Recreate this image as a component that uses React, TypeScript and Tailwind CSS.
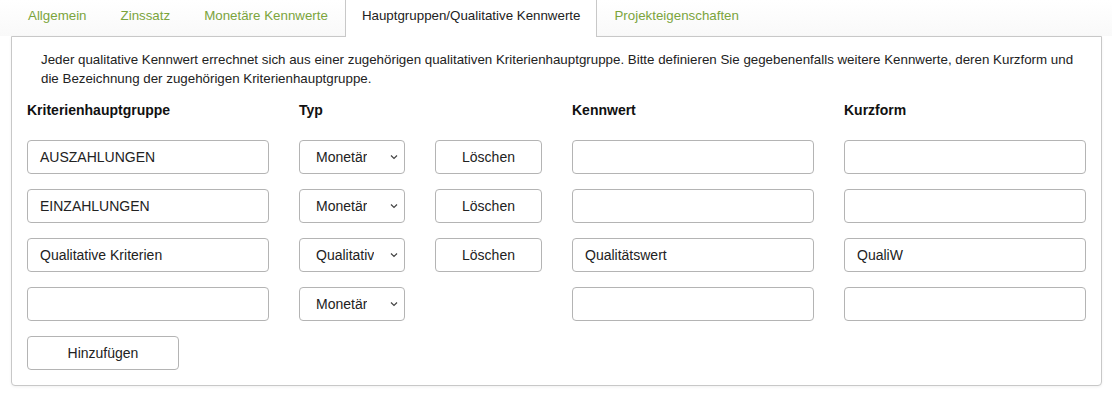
import React from "react";

const tabs = [
  { label: "Allgemein", active: false },
  { label: "Zinssatz", active: false },
  { label: "Monetäre Kennwerte", active: false },
  { label: "Hauptgruppen/Qualitative Kennwerte", active: true },
  { label: "Projekteigenschaften", active: false },
];

type Row = { group: string; typ: string; del: boolean; kennwert: string; kurz: string };

const rows: Row[] = [
  { group: "AUSZAHLUNGEN", typ: "Monetär", del: true, kennwert: "", kurz: "" },
  { group: "EINZAHLUNGEN", typ: "Monetär", del: true, kennwert: "", kurz: "" },
  { group: "Qualitative Kriterien", typ: "Qualitativ", del: true, kennwert: "Qualitätswert", kurz: "QualiW" },
  { group: "", typ: "Monetär", del: false, kennwert: "", kurz: "" },
];

function TextBox({ value }: { value: string }) {
  return (
    <div className="h-[34px] w-[242px] rounded-[4px] border border-[#b4b4b4] bg-white px-[12px] flex items-center text-[14px] text-[#222]">
      {value}
    </div>
  );
}

function SelectBox({ value }: { value: string }) {
  return (
    <div className="h-[34px] w-[106px] rounded-[4px] border border-[#b4b4b4] bg-white pl-[16px] pr-[6px] flex items-center justify-between text-[14px] text-[#222]">
      <span className="whitespace-nowrap overflow-hidden">{value}</span>
      <svg width="8" height="6" viewBox="0 0 8 6" className="shrink-0">
        <path d="M1 1.5 L4 4.5 L7 1.5" fill="none" stroke="#444" strokeWidth="1.2" />
      </svg>
    </div>
  );
}

function Btn({ label, w }: { label: string; w: string }) {
  return (
    <div className={`h-[34px] ${w} rounded-[4px] border border-[#b4b4b4] bg-white flex items-center justify-center text-[14px] text-[#222]`}>
      {label}
    </div>
  );
}

export default function App() {
  return (
    <div
      className="w-[1112px] h-[399px] bg-white"
      style={{ fontFamily: '"Liberation Sans", Arial, sans-serif' }}
    >
      <div className="flex h-[36px] pl-[11px] bg-gradient-to-b from-white to-[#f9f9f9]">
        {tabs.map((t) =>
          t.active ? (
            <div
              key={t.label}
              className="h-[37px] px-[16px] flex items-center border-x border-[#c8c8c8] bg-white text-[13.33px] text-[#222] relative z-10 pb-[5px]"
            >
              {t.label}
            </div>
          ) : (
            <div
              key={t.label}
              className="h-[36px] px-[17px] flex items-center text-[13.33px] text-[#7ba43c] pb-[4px]"
            >
              {t.label}
            </div>
          )
        )}
      </div>
      <div className="mx-[11px] w-[1091px] h-[350px] border border-[#c8c8c8] rounded-b-[4px] bg-white shadow-[0_1px_3px_rgba(0,0,0,0.06)]">
        <p className="pl-[29px] pr-[20px] pt-[13px] text-[13.33px] leading-[19px] text-[#222]">
          Jeder qualitative Kennwert errechnet sich aus einer zugehörigen qualitativen Kriterienhauptgruppe. Bitte definieren Sie gegebenenfalls weitere Kennwerte, deren Kurzform und die Bezeichnung der zugehörigen Kriterienhauptgruppe.
        </p>
        <div className="pl-[15px] pt-[12px]">
          <div className="grid grid-cols-[242px_106px_107px_242px_242px] gap-x-[30px] text-[14px] font-bold text-[#111] h-[20px] items-center">
            <div>Kriterienhauptgruppe</div>
            <div>Typ</div>
            <div></div>
            <div>Kennwert</div>
            <div>Kurzform</div>
          </div>
          <div className="mt-[20px] flex flex-col gap-[15px]">
            {rows.map((r, i) => (
              <div key={i} className="grid grid-cols-[242px_106px_107px_242px_242px] gap-x-[30px]">
                <TextBox value={r.group} />
                <SelectBox value={r.typ} />
                {r.del ? <Btn label="Löschen" w="w-[107px]" /> : <div />}
                <TextBox value={r.kennwert} />
                <TextBox value={r.kurz} />
              </div>
            ))}
            <Btn label="Hinzufügen" w="w-[152px]" />
          </div>
        </div>
      </div>
    </div>
  );
}
